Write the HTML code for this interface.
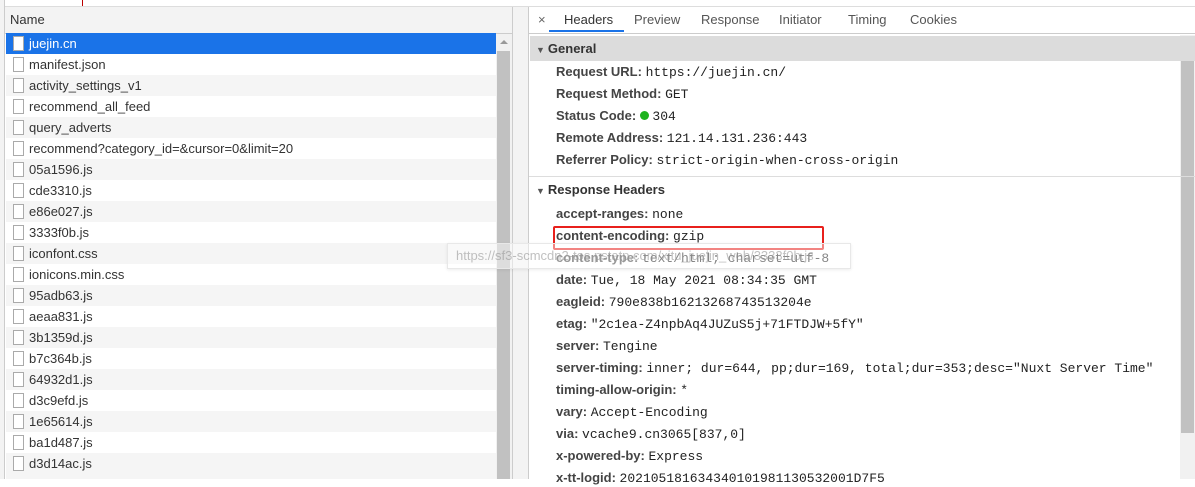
<!DOCTYPE html><html><head><style>
body{margin:0;width:1195px;height:479px;overflow:hidden;background:#fff;font-family:"Liberation Sans",sans-serif;position:relative}
.a{position:absolute}
.row{position:absolute;left:6px;width:490px;height:21px;font-size:13px;color:#333;line-height:21px}
.row i{position:absolute;left:7px;top:3px;width:9px;height:13px;border:1px solid #aaa;background:#fff}
.row span{position:absolute;left:23px}
.tab{position:absolute;top:12px;font-size:13px;color:#555}
.kv{position:absolute;left:556px;font-size:13px;color:#333;white-space:nowrap;line-height:16px}
.kv b{color:#444}
.kv m{font-family:"Liberation Mono",monospace;font-size:13px;color:#222}
.sec{position:absolute;left:530px;width:1150px;font-size:13px;font-weight:bold;color:#333}
</style></head><body>
<div class="a" style="left:0;top:0;width:1195px;height:6px;background:#fff;border-bottom:1px solid #ddd"></div>
<div class="a" style="left:0;top:0;width:4px;height:479px;background:#f3f3f3;border-right:1px solid #ccc"></div>
<div class="a" style="left:82px;top:0;width:1px;height:6px;background:#b00"></div>
<div class="a" style="left:5px;top:7px;width:507px;height:26px;background:#f3f3f3;border-bottom:1px solid #ccc;font-size:13px;color:#333;line-height:26px"><span style="padding-left:5px">Name</span></div>
<div class="a" style="left:496px;top:34px;width:16px;height:445px;background:#f1f1f1"></div>
<div class="a" style="left:497px;top:51px;width:13px;height:428px;background:#c1c1c1"></div>
<div class="a" style="left:500px;top:40px;width:0;height:0;border:4px solid transparent;border-bottom-color:#999;border-top:0"></div>
<div class="a" style="left:512px;top:7px;width:1px;height:472px;background:#ccc"></div>
<div class="a" style="left:513px;top:7px;width:15px;height:472px;background:#f3f3f3;border-right:1px solid #ccc"></div>
<div id="list"></div>
<div class="a" style="left:529px;top:7px;width:666px;height:26px;border-bottom:1px solid #ccc;background:#fff"></div>
<div class="tab" style="left:538px;color:#666">×</div>
<div class="tab" style="left:564px;color:#333">Headers</div>
<div class="a" style="left:549px;top:30px;width:75px;height:2px;background:#1a73e8"></div>
<div class="tab" style="left:634px">Preview</div>
<div class="tab" style="left:701px">Response</div>
<div class="tab" style="left:779px">Initiator</div>
<div class="tab" style="left:848px">Timing</div>
<div class="tab" style="left:910px">Cookies</div>
<div class="a" style="left:1180px;top:35px;width:15px;height:444px;background:#f1f1f1"></div>
<div class="a" style="left:1181px;top:50px;width:13px;height:383px;background:#c1c1c1"></div>
<div class="a" style="left:1184px;top:40px;border:4px solid transparent;border-bottom-color:#999;border-top:0"></div>
<div class="sec" style="top:36px;height:25px;background:#dcdcdc;line-height:25px;width:1150px"><span style="font-size:9px;color:#555;padding:0 3px 0 6px">▼</span>General</div>
<div class="a" style="left:529px;top:176px;width:1150px;height:1px;background:#ddd"></div>
<div class="sec" style="top:182px;line-height:16px"><span style="font-size:9px;color:#555;padding:0 3px 0 6px">▼</span>Response Headers</div>
<div class="kv" style="top:64px"><b>Request URL:</b> <m>https://juejin.cn/</m></div>
<div class="kv" style="top:86px"><b>Request Method:</b> <m>GET</m></div>
<div class="kv" style="top:108px"><b>Status Code:</b> <span style="display:inline-block;width:9px;height:9px;border-radius:50%;background:#1fb31f"></span> <m>304</m></div>
<div class="kv" style="top:130px"><b>Remote Address:</b> <m>121.14.131.236:443</m></div>
<div class="kv" style="top:152px"><b>Referrer Policy:</b> <m>strict-origin-when-cross-origin</m></div>
<div class="kv" style="top:206px"><b>accept-ranges:</b> <m>none</m></div>
<div class="kv" style="top:228px"><b>content-encoding:</b> <m>gzip</m></div>
<div class="kv" style="top:250px"><b>content-type:</b> <m>text/html; charset=utf-8</m></div>
<div class="kv" style="top:272px"><b>date:</b> <m>Tue, 18 May 2021 08:34:35 GMT</m></div>
<div class="kv" style="top:294px"><b>eagleid:</b> <m>790e838b16213268743513204e</m></div>
<div class="kv" style="top:316px"><b>etag:</b> <m>"2c1ea-Z4npbAq4JUZuS5j+71FTDJW+5fY"</m></div>
<div class="kv" style="top:338px"><b>server:</b> <m>Tengine</m></div>
<div class="kv" style="top:360px"><b>server-timing:</b> <m>inner; dur=644, pp;dur=169, total;dur=353;desc="Nuxt Server Time"</m></div>
<div class="kv" style="top:382px"><b>timing-allow-origin:</b> <m>*</m></div>
<div class="kv" style="top:404px"><b>vary:</b> <m>Accept-Encoding</m></div>
<div class="kv" style="top:426px"><b>via:</b> <m>vcache9.cn3065[837,0]</m></div>
<div class="kv" style="top:448px"><b>x-powered-by:</b> <m>Express</m></div>
<div class="kv" style="top:470px"><b>x-tt-logid:</b> <m>202105181634340101981130532001D7F5</m></div>
<div class="a" style="left:553px;top:226px;width:267px;height:20px;border:2px solid #e8201c;border-radius:2px"></div>
<div class="a" style="left:447px;top:243px;width:402px;height:24px;background:rgba(255,255,255,0.45);border:1px solid #e8e8e8;box-shadow:0 1px 3px rgba(0,0,0,0.08);font-size:13px;color:rgba(150,150,150,0.6);line-height:24px;white-space:nowrap;overflow:hidden"><span style="padding-left:8px">https://sf3-scmcdn2-tos.pstatp.com/xitu_juejin_web/3333f0b.js</span></div>
<script>
var n=["juejin.cn","manifest.json","activity_settings_v1","recommend_all_feed","query_adverts","recommend?category_id=&cursor=0&limit=20","05a1596.js","cde3310.js","e86e027.js","3333f0b.js","iconfont.css","ionicons.min.css","95adb63.js","aeaa831.js","3b1359d.js","b7c364b.js","64932d1.js","d3c9efd.js","1e65614.js","ba1d487.js","d3d14ac.js"],h="";
n.forEach(function(t,i){var bg=i==0?"#1a73e8":(i%2?"#fff":"#f5f5f5");var c=i==0?"#fff":"#333";
h+='<div class="row" style="top:'+(33+21*i)+'px;background:'+bg+';color:'+c+'"><i></i><span>'+t+'</span></div>';});
h+='<div class="row" style="top:474px;height:5px;background:#f5f5f5"></div>';
document.getElementById("list").innerHTML=h;
</script>
</body></html>
